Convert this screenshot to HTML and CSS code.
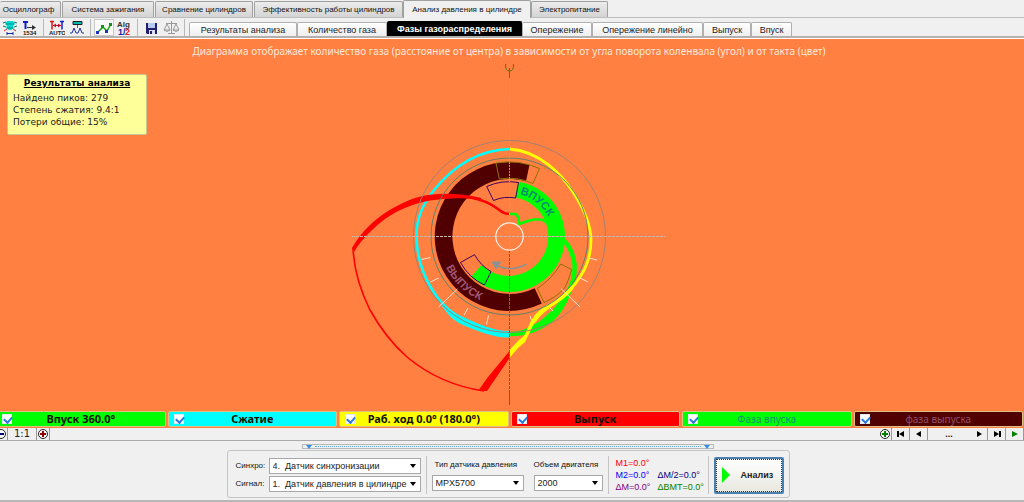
FILE: index.html
```html
<!DOCTYPE html>
<html lang="ru">
<head>
<meta charset="utf-8">
<title>Анализ давления в цилиндре</title>
<link rel="stylesheet" href="styles.css">
</head>
<body>
<div class="app">
  <nav class="main-tabs" aria-label="Разделы">
    <button class="main-tab main-tab-first w-61">Осциллограф</button>
    <button class="main-tab w-92">Система зажигания</button>
    <button class="main-tab w-98">Сравнение цилиндров</button>
    <button class="main-tab w-149">Эффективность работы цилиндров</button>
    <button class="main-tab main-tab-active w-128">Анализ давления в цилиндре</button>
    <button class="main-tab w-77">Электропитание</button>
  </nav>

  <div class="tool-row">
    <div class="tools">
      <button class="tool" aria-label="Датчик">
        <svg width="16" height="16" viewBox="0 0 16 16"><path d="M5 1h6l2 3-2 2 1 2-3 2H7L4 8l1-2-2-2z" fill="#00d8d0"/><path d="M4 4h8M5 8h6" stroke="#009088"/><path d="M1 3l3-1M1 6l3 1M15 3l-3-1M15 6l-3 1" stroke="#008060"/><path d="M2 11l3-2M14 11l-3-2" stroke="#e02020"/><path d="M5 13.500h6M5 12v3M11 12v3" stroke="#1030a0"/></svg>
      </button>
      <button class="tool" aria-label="Счёт">
        <svg width="16" height="16" viewBox="0 0 16 16"><path d="M1 2h5M3.500 2v7" stroke="#1020d0" stroke-width="2"/><path d="M5 7.500h7" stroke="#333"/><path d="M10 5l4 2.500-4 2.500z" fill="#333"/><text class="icon-text" x="1" y="15">1534</text></svg>
      </button>
      <span class="tool-sep"></span>
      <button class="tool" aria-label="Авто">
        <svg width="16" height="16" viewBox="0 0 16 16"><path d="M1 1.500h4M3 1.500v8" stroke="#e01010" stroke-width="1.500"/><path d="M11 1.500h4M13 1.500v8" stroke="#1020d0" stroke-width="1.500"/><path d="M4 5.500h8" stroke="#c01030"/><path d="M7 3.500L4 5.500l3 2zM9 3.500l3 2-3 2z" fill="#c01030"/><text class="icon-text" x="0" y="15">AUTO</text></svg>
      </button>
      <button class="tool" aria-label="Импульсы">
        <svg width="16" height="16" viewBox="0 0 16 16"><path d="M4 1.500h9v3H4z" fill="#00b8b0" stroke="#202020"/><path d="M8.500 5v3" stroke="#666"/><path d="M1 13h2l2-5 2 5h2l2-5 2 5h2" fill="none" stroke="#2030a0"/></svg>
      </button>
      <span class="tool-sep"></span>
      <button class="tool tool-pressed" aria-label="График">
        <svg width="16" height="16" viewBox="0 0 16 16"><path d="M2 12l5-5 4 4 4-7" fill="none" stroke="#10a010" stroke-width="1.500"/><path d="M0 11h3v3H0zM9 10h3v3H9z" fill="#2030c0"/><path d="M5 5h3v3H5zM13 3h3v3h-3z" fill="#109020"/></svg>
      </button>
      <button class="tool" aria-label="Алгоритм">
        <svg width="16" height="16" viewBox="0 0 16 16"><text class="icon-alg" x="1" y="7">Alg</text><text class="icon-half icon-blue" x="2" y="15">1/</text><text class="icon-half icon-red" x="9" y="15">2</text></svg>
      </button>
      <span class="tool-sep"></span>
      <button class="tool" aria-label="Сохранить">
        <svg width="16" height="16" viewBox="0 0 16 16"><path d="M3 3h11v11H4l-1-1z" fill="#202068"/><path d="M5 3h7v5H5z" fill="#b8c8f0"/><path d="M6 10h6v4H6z" fill="#dde"/><path d="M7 11h2v3H7z" fill="#202068"/></svg>
      </button>
      <button class="tool" aria-label="Сравнить">
        <svg width="16" height="16" viewBox="0 0 16 16" fill="none" stroke="#999"><path d="M8.500 1v12M5 13.500h7M3 3.500h11M4 4l-3 6h6zM13 4l-3 6h6z"/><path d="M1 10q3 3 6 0M10 10q3 3 6 0"/></svg>
      </button>
      <span class="tool-sep"></span>
    </div>
    <nav class="sub-tabs" aria-label="Вид анализа">
      <button class="sub-tab w-108">Результаты анализа</button>
      <button class="sub-tab w-90">Количество газа</button>
      <button class="sub-tab sub-tab-active w-135">Фазы газораспределения</button>
      <button class="sub-tab w-70">Опережение</button>
      <button class="sub-tab w-111">Опережение линейно</button>
      <button class="sub-tab w-48">Выпуск</button>
      <button class="sub-tab w-41">Впуск</button>
    </nav>
  </div>

  <main class="plot">
    <p class="plot-title">Диаграмма отображает количество газа (расстояние от центра) в зависимости от угла поворота коленвала (угол) и от такта (цвет)</p>
    <section class="results">
      <h2 class="results-title">Результаты анализа</h2>
      <p>Найдено пиков: 279</p>
      <p>Степень сжатия: 9.4:1</p>
      <p>Потери общие: 15%</p>
    </section>
    <svg class="diagram" viewBox="352 60 320 350" role="img" aria-label="Фазы газораспределения">
      <defs>
        <path id="intake-arc" d="M516 193.500A43 43 0 0 1 552.500 238"/>
        <path id="exhaust-arc" d="M441.500 255A70 70 0 0 0 509 306.500"/>
      </defs>
      <path d="M529.500 164.800A74.500 74.500 0 1 0 541.800 303.500L534.700 288.300A57.500 57.500 0 1 1 526 181.200z" fill="#500000"/>
      <path d="M519 181.800A55.500 55.500 0 1 1 471.300 276.700L481.500 265A39.500 39.500 0 1 0 514.500 197.300z" fill="#00ff00"/>
      <text class="arc-label arc-intake"><textPath href="#intake-arc" startOffset="4">ВПУСК</textPath></text>
      <text class="arc-label arc-exhaust"><textPath href="#exhaust-arc" startOffset="13">ВЫПУСК</textPath></text>
      <g fill="none" stroke="#907000">
        <path d="M496 163A75 75 0 0 1 539.500 168.500L533 183.500A58 58 0 0 0 499.300 179z"/>
        <path d="M560.700 264L571.700 269.500Q568 282 564.500 288Q557 297 544 302.500L537.300 288.500Q552 279 560.700 264z"/>
      </g>
      <g fill="none" stroke="#400060">
        <path d="M486.700 186.500A55 55 0 0 1 518.500 182.500L515.700 198A39 39 0 0 0 493.500 200.500z"/>
        <path d="M460.500 262.500L474.500 254.700Q481 266 491 271.500L484.500 285Q469 278 460.500 262.500z"/>
      </g>
      <path d="M509.500 149C476 150 452 168 434 190C421 206 416.500 220 416.500 235C416.500 255 421 270 430 286C438 300 447 311 460 317C475 324 490 332 509.500 333.500" fill="none" stroke="#00ffff" stroke-width="2.600"/>
      <path d="M436 297C443 308 450 314 461 317C477 323 492 331 509.500 331V337.500C494 338 478 331 463 325C452 320 446 313 436 297z" fill="#00ffff"/>
      <path d="M563 240C570 246 573 254 574.500 264C575 276 573 282 569 291C564 304 559 312 549 321C538 330 525 334 509.500 334" fill="none" stroke="#00ff00" stroke-width="4.500"/>
      <path d="M566 290L573 286C569 300 563 312 552 322C540 331 530 334 520 335L519 331C532 327 541 321 548 314C556 307 562 298 566 290z" fill="#00ff00"/>
      <path d="M509.500 149C540 151 562 175 573 192C584 209 591 224 591 240C591 257 586 268 580 277C572 290 563 297 554 303C545 308 538 315 534 322" fill="none" stroke="#ffff00" stroke-width="2.800"/>
      <path d="M571 286L574 288C567 297 558 303 551 307C543 313 537 319 533 325L530 332L525 342L518 348L509.500 358V350L519 340L524 336L529 325C534 314 541 308 549 304C558 299 565 294 571 286z" fill="#ffff00"/>
      <path d="M509.500 214h5.500q3 1 3.500 5l1 5 5-2 9-2.500h8l7 4" fill="none" stroke="#00ff00" stroke-width="2.500"/>
      <path d="M509.500 214C503 214 502 212 498 209C490 203 482 199.500 470 197.500C455 195 440 195 423 198" fill="none" stroke="#ff0000" stroke-width="2.600"/>
      <path d="M353 248C354 270 360 290 370 310C380 328 390 342 407 357C425 372 450 386 484 391" fill="none" stroke="#ff0000" stroke-width="1.600"/>
      <path d="M352 248C361 232 375 219 388 211C402 203 412 197 432 194.500C448 193 465 194 481 198V200C465 197 445 198 430 200.500C412 204 398 210 385 219C372 229 361 240 354 252z" fill="#ff0000"/>
      <path d="M509.500 351V358L487 391H478L488 377z" fill="#ff0000"/>
      <circle cx="509.500" cy="236.500" r="96" fill="none" stroke="#a08072"/>
      <circle cx="509.500" cy="236.500" r="78.500" fill="none" stroke="#608068"/>
      <path d="M352 236.500H665" stroke="#d0b4a8" stroke-dasharray="3 1"/>
      <path d="M509.500 78V250" stroke="#b0a0a0" stroke-dasharray="2 1"/>
      <path d="M509.500 250V405" stroke="#408030" stroke-dasharray="3 1"/>
      <path d="M509.500 390V405M509.500 68V78M505.500 64Q505 71 509.500 71T513.500 64" fill="none" stroke="#607018"/>
      <circle cx="509.500" cy="236.500" r="13.700" fill="none" stroke="#fff0e8" stroke-width="1.200"/>
      <path d="M421.500 259.500l9-2M430.500 282l8-4M438.500 307l19-18M464 315l4-7M486.500 324.500l2-9M589 258l8 2M580 278l8 4M561 288.500l19 18.500M550 308l3 3M530 316l2 6" stroke="#ffe0d0"/>
      <path d="M526.500 264Q513 272 497 266" fill="none" stroke="#8c9292" stroke-width="1.500"/>
      <path d="M491 261.500h10.500l-5.500 8z" fill="#8c9292"/>
    </svg>
  </main>

  <div class="legend">
    <label class="legend-item green"><input type="checkbox" class="check" checked><span>Впуск 360.0°</span></label>
    <label class="legend-item cyan"><input type="checkbox" class="check" checked><span>Сжатие</span></label>
    <label class="legend-item yellow"><input type="checkbox" class="check" checked><span>Раб. ход 0.0° (180.0°)</span></label>
    <label class="legend-item red"><input type="checkbox" class="check" checked><span>Выпуск</span></label>
    <label class="legend-item green phase-in"><input type="checkbox" class="check" checked><span>Фаза впуска</span></label>
    <label class="legend-item maroon phase-out"><input type="checkbox" class="check" checked><span>фаза выпуска</span></label>
  </div>

  <div class="scale-row">
    <div class="scale-group">
      <button class="nav-btn nav-half" aria-label="Уменьшить"><svg width="12" height="12" viewBox="0 0 12 12"><circle cx="6" cy="6" r="4.500" fill="#fff" stroke="#222"/><path d="M3 6h6" stroke="#000080" stroke-width="2"/></svg></button>
      <button class="nav-btn nav-ratio">1:1</button>
      <button class="nav-btn" aria-label="Увеличить"><svg width="12" height="12" viewBox="0 0 12 12"><circle cx="6" cy="6" r="4.500" fill="#fff" stroke="#222"/><path d="M3 6h6M6 3v6" stroke="#900000" stroke-width="2"/></svg></button>
    </div>
    <div class="scale-group">
      <button class="nav-btn" aria-label="Добавить"><svg width="12" height="12" viewBox="0 0 12 12"><circle cx="6" cy="6" r="4.500" fill="#fff" stroke="#222"/><path d="M3 6h6M6 3v6" stroke="#008000" stroke-width="2"/></svg></button>
      <button class="nav-btn nav-wide" aria-label="В начало"><svg width="12" height="12" viewBox="0 0 12 12"><path d="M2 3h2v6H2zM4 6l5-3v6z"/></svg></button>
      <button class="nav-btn nav-wide" aria-label="Назад"><svg width="12" height="12" viewBox="0 0 12 12"><path d="M3 6l5-3v6z"/></svg></button>
      <span class="nav-dots">...</span>
      <button class="nav-btn nav-wide" aria-label="Вперёд"><svg width="12" height="12" viewBox="0 0 12 12"><path d="M9 6L4 3v6z"/></svg></button>
      <button class="nav-btn nav-wide" aria-label="В конец"><svg width="12" height="12" viewBox="0 0 12 12"><path d="M8 3h2v6H8zM8 6L3 3v6z"/></svg></button>
      <button class="nav-btn nav-wide" aria-label="Пуск"><svg width="12" height="12" viewBox="0 0 12 12"><path d="M9 6L3 3v6z" fill="#008000"/></svg></button>
    </div>
  </div>

  <div class="bottom">
    <div class="splitter">
      <svg width="6" height="4" viewBox="0 0 6 4"><path d="M0 0h6L3 4z" fill="#3090f0"/></svg>
      <span class="splitter-dots"></span>
      <svg width="6" height="4" viewBox="0 0 6 4"><path d="M0 0h6L3 4z" fill="#3090f0"/></svg>
    </div>
    <form class="settings">
      <div class="channels">
        <label for="sync">Синхро:</label>
        <span class="select-box"><select id="sync" class="select"><option>4.&nbsp; Датчик синхронизации</option></select></span>
        <label for="signal">Сигнал:</label>
        <span class="select-box"><select id="signal" class="select"><option>1.&nbsp; Датчик давления в цилиндре</option></select></span>
      </div>
      <span class="divider"></span>
      <div class="field w-92">
        <label for="sensor">Тип датчика давления</label>
        <span class="select-box"><select id="sensor" class="select"><option>MPX5700</option></select></span>
      </div>
      <div class="field field-second w-69">
        <label for="volume">Объем двигателя</label>
        <span class="select-box"><select id="volume" class="select"><option>2000</option></select></span>
      </div>
      <span class="divider"></span>
      <div class="markers">
        <span class="m-red">M1=0.0°</span><span></span>
        <span class="m-blue">M2=0.0°</span><span class="m-navy">ΔM/2=0.0°</span>
        <span class="m-purple">ΔM=0.0°</span><span class="m-green">ΔВМТ=0.0°</span>
      </div>
      <span class="divider"></span>
      <button type="button" class="analyze"><svg width="8" height="16" viewBox="0 0 8 16"><path d="M0 0l8 8-8 8z" fill="#00ff00"/></svg><span>Анализ</span></button>
    </form>
  </div>
</div>
</body>
</html>
```

FILE: styles.css
```css
* { box-sizing: border-box; }
body {
  margin: 0;
  background: #f0f0f0;
  color: #222;
  font: 9px/12px "Liberation Sans", Arial, sans-serif;
}
button { font: inherit; color: inherit; padding: 0; margin: 0; border: 0; background: none; white-space: nowrap; }
svg { display: block; }
p, h2 { margin: 0; }
.app { display: flex; flex-direction: column; min-height: 100vh; overflow: hidden; }

.main-tabs {
  display: flex;
  align-items: flex-end;
  height: 18px;
  border-bottom: 1px solid #bdbdbd;
  color: #111;
  font-size: 8px;
}
.main-tab {
  height: 16px;
  border: 1px solid #a0a0a0;
  border-bottom: 0;
  border-radius: 2px 2px 0 0;
  background: linear-gradient(#ececec, #d4d4d4);
}
.main-tab + .main-tab { margin-left: 1px; }
.main-tab-first { padding-right: 3px; border-left: 0; }
.main-tab.main-tab-active { height: 18px; margin: 0 -1px -1px 0; background: #f0f0f0; }

.tool-row {
  display: flex;
  height: 21px;
  padding-top: 1px;
  border-bottom: 1px solid #fff;
  box-shadow: inset 0 -2px #b4b0ae;
}
.tools { display: flex; flex: none; width: 189px; }
.tool { display: flex; align-items: center; justify-content: center; width: 20px; height: 17px; }
.tool-pressed { background: #fafafa; border: 1px solid #c8c8c8; }
.tool-sep { width: 1px; height: 17px; margin: 0 3px; background: #b8b8b8; }
.icon-text { font: bold 6px "Liberation Sans", sans-serif; fill: #222; }
.icon-alg { font: bold 8px "Liberation Sans", sans-serif; fill: #333; }
.icon-half { font: bold 9px "Liberation Sans", sans-serif; }
.icon-blue { fill: #2020a0; }
.icon-red { fill: #e02020; }

.sub-tabs { display: flex; align-items: flex-end; padding-bottom: 2px; }
.sub-tab {
  height: 14px;
  border: 1px solid #b0b0b0;
  border-bottom: 0;
  border-radius: 2px 2px 0 0;
  background: linear-gradient(#fff, #eee);
}
.sub-tab-active { height: 15px; border-color: #000; background: #000; color: #fff; font-weight: bold; }

.w-41 { width: 41px; }
.w-48 { width: 48px; }
.w-61 { width: 61px; }
.w-69 { width: 69px; }
.w-70 { width: 70px; }
.w-77 { width: 77px; }
.w-90 { width: 90px; }
.w-92 { width: 92px; }
.w-98 { width: 98px; }
.w-108 { width: 108px; }
.w-111 { width: 111px; }
.w-128 { width: 128px; }
.w-135 { width: 135px; }
.w-149 { width: 149px; }

.plot {
  position: relative;
  flex: 1;
  display: flex;
  flex-direction: column;
  align-items: center;
  background: #ff8040;
}
.plot-title {
  padding: 5px 6px 1px 0;
  color: #ffe8dc;
  font: 10px/15px "Noto Sans", Tahoma, sans-serif;
  text-align: center;
}
.results {
  position: absolute;
  left: 7px;
  top: 35px;
  width: 140px;
  padding: 2px 5px 6px;
  border: 1px solid #c8c890;
  border-radius: 2px;
  background: #ffff99;
  font: 9px/12px "DejaVu Sans", Verdana, sans-serif;
}
.results-title { margin-bottom: 3px; font-size: 9px; line-height: 12px; text-align: center; text-decoration: underline; color: #000; }
.diagram { width: 320px; height: 350px; overflow: visible; }
.arc-label { font: bold 11px "Liberation Sans", Arial, sans-serif; }
.arc-intake { fill: #008878; }
.arc-exhaust { fill: #a05878; }

.legend {
  display: grid;
  grid-template-columns: repeat(6, 1fr);
  gap: 2px;
  margin-left: -4px;
  padding: 1px 1px 1px 0;
  background: #ff8040;
  font: bold 11px/14px "Noto Sans", Tahoma, sans-serif;
  color: #101000;
}
.legend-item {
  display: flex;
  align-items: center;
  height: 16px;
  padding: 0 15px 0 5px;
  border: 1px solid #e0c080;
  border-radius: 2px;
}
.legend-item span { flex: 1; text-align: center; white-space: nowrap; }
.green { background: #00ff00; }
.cyan { background: #00ffff; }
.yellow { background: #ffff00; }
.red { background: #ff0000; }
.maroon { background: #500000; }
.phase-in { color: #109070; font-size: 10px; font-weight: normal; }
.phase-out { color: #905068; font-size: 10px; font-weight: normal; }
.check {
  appearance: none;
  flex: none;
  width: 10px;
  height: 10px;
  margin: 0;
  background: #fff;
  border: 1px solid #e0e8f0;
}
.check:checked::after {
  content: "";
  display: block;
  width: 6px;
  height: 4px;
  margin: 1px;
  border: solid #2878e0;
  border-width: 0 0 2px 2px;
  transform: rotate(-48deg);
}

.scale-row {
  display: flex;
  justify-content: space-between;
  height: 13px;
  border-bottom: 1px solid #aaa;
}
.scale-group { display: flex; }
.nav-btn {
  display: flex;
  flex: none;
  align-items: center;
  justify-content: center;
  width: 13px;
  height: 12px;
  border-right: 1px solid #999;
}
.nav-btn svg { flex: none; }
.nav-half { justify-content: flex-end; width: 8px; overflow: hidden; }
.nav-ratio { width: 29px; font: 10px/12px "DejaVu Sans", sans-serif; }
.nav-wide { width: 18px; }
.nav-dots { width: 42px; text-align: center; font-weight: bold; }

.bottom {
  display: flex;
  flex-direction: column;
  align-items: center;
  padding: 3px 8px 2px 0;
  height: 61px;
  box-shadow: inset 0 -2px #b8b8b8;
}
.splitter {
  display: flex;
  align-items: center;
  gap: 3px;
  width: 412px;
  height: 5px;
  padding: 0 3px;
  border: 1px solid #b8b8b8;
}
.splitter-dots { flex: 1; border-top: 1px dotted #60a8f0; }
.settings {
  display: flex;
  align-items: center;
  gap: 5px;
  height: 48px;
  margin-top: 1px;
  padding: 2px 5px 0 8px;
  border: 1px solid #c4c4c4;
  border-radius: 3px;
}
.settings label { font-size: 8px; color: #111; }
.channels { display: grid; grid-template-columns: 32px 152px; gap: 2px 1px; align-items: center; }
.select-box { position: relative; display: block; }
.select-box::after {
  content: "";
  position: absolute;
  right: 5px;
  top: 6px;
  border: 3px solid transparent;
  border-top: 4px solid #000;
  border-bottom: 0;
  pointer-events: none;
}
.select {
  appearance: none;
  display: block;
  width: 100%;
  height: 16px;
  padding: 0 3px;
  border: 1px solid #a8a8a8;
  border-radius: 0;
  background: #fff;
  color: #222;
  font: inherit;
}
.divider { width: 1px; height: 38px; background: #c4c4c4; }
.field { display: flex; flex-direction: column; gap: 4px; white-space: nowrap; }
.field label { padding-left: 3px; }
.field-second { margin-left: 5px; }
.field-second label { padding-left: 0; }
.markers { display: grid; grid-template-columns: 38px 45px; column-gap: 4px; padding-left: 2px; white-space: nowrap; }
.m-red { color: #ff0000; }
.m-blue { color: #0000ff; }
.m-navy { color: #000080; }
.m-purple { color: #800080; }
.m-green { color: #008000; }
.analyze {
  display: flex;
  align-items: center;
  gap: 11px;
  width: 70px;
  height: 37px;
  padding: 0 6px;
  border: 2px solid #4a80b0;
  border-radius: 2px;
  background: linear-gradient(#fff, #e8e8e0);
  outline: 1px dotted #333;
  outline-offset: -3px;
  font-weight: bold;
}
```
